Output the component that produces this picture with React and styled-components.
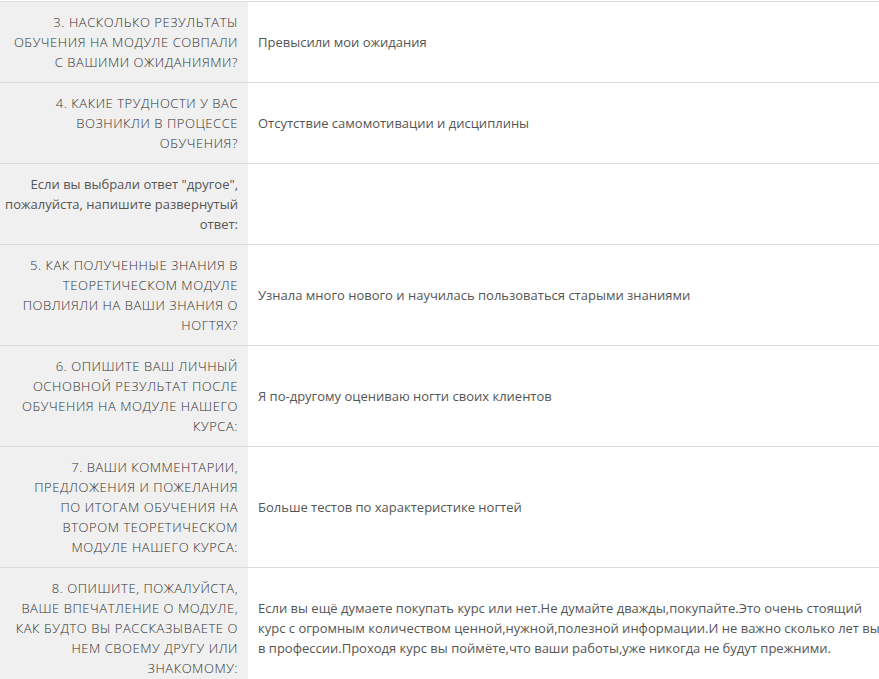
import React from "react";
import styled, { createGlobalStyle } from "styled-components";

const Global = createGlobalStyle`
  html, body { margin: 0; padding: 0; background: #fff; }
  body { font-family: "Open Sans", "Liberation Sans", Arial, sans-serif; }
`;

const Table = styled.div`
  margin-top: 1px;
  width: 879px;
  display: grid;
  grid-template-columns: 248px 1fr;
  color: #555;
  font-size: 13px;
  line-height: 20px;
`;

const Question = styled.div`
  background: #f0f0f0;
  border-top: 1px solid #dcdcdc;
  padding: 10px 10px 10px 0;
  text-align: right;
  text-transform: ${(p) => (p.$plain ? "none" : "uppercase")};
  letter-spacing: ${(p) => (p.$plain ? "0" : "0.55px")};
  font-weight: ${(p) => (p.$plain ? 400 : 300)};
  color: ${(p) => (p.$plain ? "#555" : "#333")};
`;

const Answer = styled.div`
  border-top: 1px solid #dcdcdc;
  padding: 10px 0 10px 10px;
  display: flex;
  flex-direction: column;
  justify-content: center;
`;

const Line = styled.span`
  display: block;
  white-space: nowrap;
`;

const rows = [
  {
    q: ["3. Насколько результаты", "обучения на модуле совпали", "с вашими ожиданиями?"],
    a: ["Превысили мои ожидания"],
  },
  {
    q: ["4. Какие трудности у вас", "возникли в процессе", "обучения?"],
    a: ["Отсутствие самомотивации и дисциплины"],
  },
  {
    q: ['Если вы выбрали ответ "другое",', "пожалуйста, напишите развернутый", "ответ:"],
    plain: true,
    a: [],
  },
  {
    q: ["5. Как полученные знания в", "теоретическом модуле", "повлияли на ваши знания о", "ногтях?"],
    a: ["Узнала много нового и научилась пользоваться старыми знаниями"],
  },
  {
    q: ["6. Опишите ваш личный", "основной результат после", "обучения на модуле нашего", "курса:"],
    a: ["Я по-другому оцениваю ногти своих клиентов"],
  },
  {
    q: ["7. Ваши комментарии,", "предложения и пожелания", "по итогам обучения на", "втором теоретическом", "модуле нашего курса:"],
    a: ["Больше тестов по характеристике ногтей"],
  },
  {
    q: ["8. Опишите, пожалуйста,", "ваше впечатление о модуле,", "как будто вы рассказываете о", "нем своему другу или", "знакомому:"],
    a: [
      "Если вы ещё думаете покупать курс или нет.Не думайте дважды,покупайте.Это очень стоящий",
      "курс с огромным количеством ценной,нужной,полезной информации.И не важно сколько лет вы",
      "в профессии.Проходя курс вы поймёте,что ваши работы,уже никогда не будут прежними.",
    ],
  },
];

export default function App() {
  return (
    <>
      <Global />
      <Table>
        {rows.map((r, i) => (
          <React.Fragment key={i}>
            <Question $plain={r.plain}>
              {r.q.map((l, j) => (
                <Line key={j}>{l}</Line>
              ))}
            </Question>
            <Answer>
              {r.a.map((l, j) => (
                <Line key={j}>{l}</Line>
              ))}
            </Answer>
          </React.Fragment>
        ))}
      </Table>
    </>
  );
}
